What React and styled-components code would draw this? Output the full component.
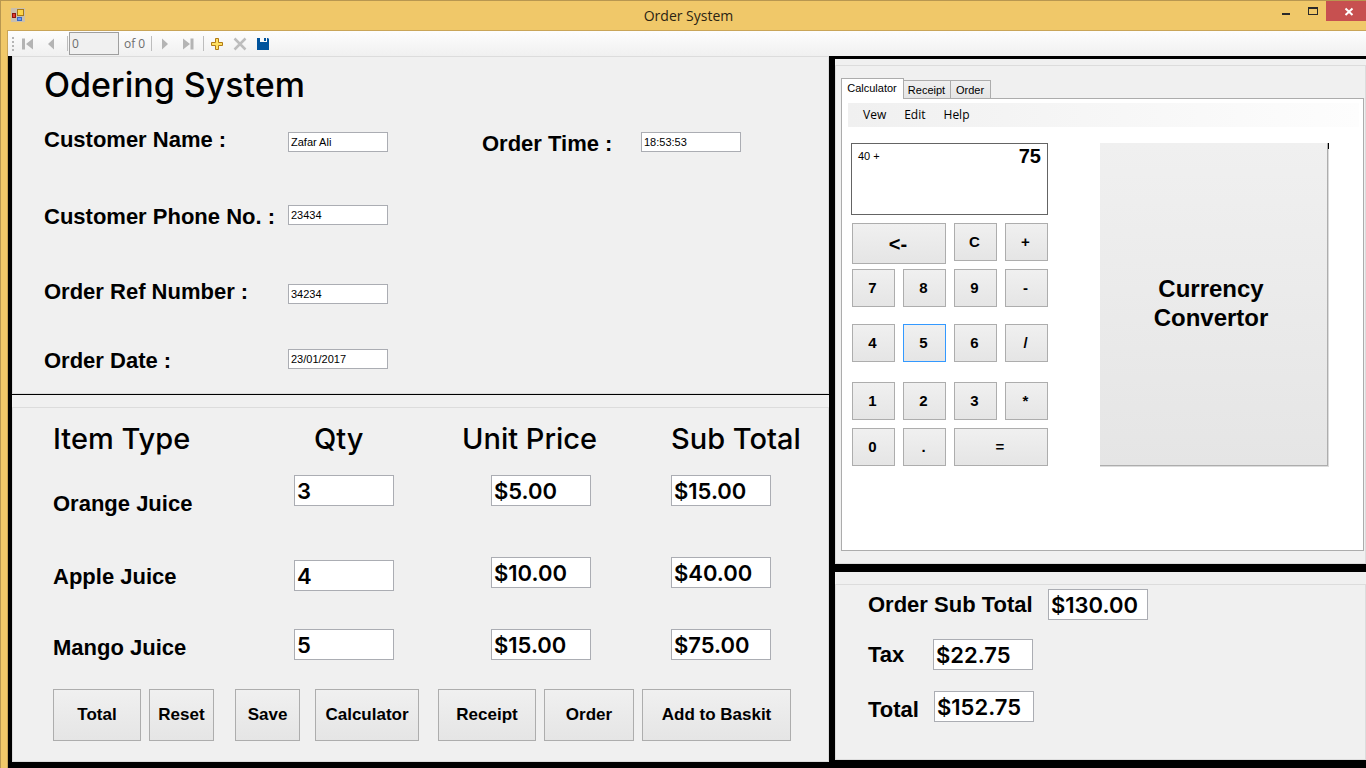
import React from "react";
import styled, { createGlobalStyle, css } from "styled-components";

const ui = '"Liberation Sans", Arial, sans-serif';
const display = 'Inter, "Liberation Sans", sans-serif';
const chrome = '"Open Sans", "Noto Sans", sans-serif';

const GlobalStyle = createGlobalStyle`
  *, *::before, *::after { box-sizing: border-box; }
  body { margin: 0; background: #f0c869; color: #000; font-family: ${ui}; font-size: 11px; }
  button, input { font: inherit; color: inherit; margin: 0; border-radius: 0; }
`;

const Window = styled.div`
  min-height: 100vh;
  display: flex;
  flex-direction: column;
  background: #f0c869;
  border: solid #b89750;
  border-width: 1px 0 0 1px;
`;

const TitleBar = styled.header`
  display: flex;
  align-items: flex-start;
  height: 29px;
  padding-left: 10px;
`;

const AppIcon = styled.svg`
  width: 14px;
  height: 14px;
  margin-top: 7px;
`;

const WindowTitle = styled.h1`
  flex: 1;
  margin: 0;
  padding-left: 80px;
  text-align: center;
  font: 400 14px/30px ${chrome};
  color: #2b2413;
`;

const WindowControls = styled.div`
  display: flex;
`;

const ControlButton = styled.button`
  width: ${(p) => (p.$close ? 40 : 27)}px;
  height: 20px;
  padding: 0;
  border: 0;
  background: ${(p) => (p.$close ? "#c75050" : "transparent")};
  display: flex;
  svg { display: block; }
`;

const Client = styled.div`
  flex: 1;
  display: flex;
  flex-direction: column;
  margin-left: 6px;
  border: solid #c9a558;
  border-width: 1px 0 0 1px;
  background: #000;
`;

const ToolStrip = styled.div`
  display: flex;
  align-items: center;
  height: 25px;
  padding-left: 4px;
  background: linear-gradient(#fdfdfd, #f0f0f0);
  font: 400 12px/24px ${chrome};
  color: #6d6d6d;
`;

const ToolButton = styled.button`
  width: 23px;
  height: 22px;
  padding: 0;
  border: 0;
  background: none;
  display: flex;
  align-items: center;
  justify-content: center;
`;

const Grip = styled.span`
  width: 2px;
  height: 14px;
  margin-right: 3px;
  background: repeating-linear-gradient(#b5b5b5 0 2px, transparent 2px 4px);
`;

const Divider = styled.span`
  width: 1px;
  height: 15px;
  margin: 0 1px 0 4px;
  background: #bdbdbd;
`;

const PositionInput = styled.input`
  width: 50px;
  height: 23px;
  padding: 0 2px;
  border: 1px solid #9f9f9f;
  background: #f0f0f0;
`;

const CountLabel = styled.span`
  width: 28px;
  padding-left: 5px;
  white-space: nowrap;
`;

const Workspace = styled.main`
  flex: 1;
  display: grid;
  grid-template-columns: minmax(0, 817fr) minmax(0, 531fr);
  column-gap: 6px;
  padding-left: 4px;
`;

const Column = styled.div`
  display: flex;
  flex-direction: column;
  gap: ${(p) => p.$gap}px;
  padding: ${(p) => p.$top}px 0 ${(p) => p.$bottom}px;
`;

const Panel = styled.section`
  display: flex;
  flex-direction: column;
  background: #f0f0f0;
  padding-top: ${(p) => p.$inset}px;
  flex: ${(p) => (p.$grow ? 1 : "none")};
`;

const Group = styled.div`
  flex: 1;
  border: 1px solid #dcdcdc;
  padding: ${(p) => p.$pad};
`;

const Heading = styled.h2`
  margin: 0;
  font: 500 34px/40px ${display};
`;

const CustomerArea = styled.div`
  display: grid;
  grid-template-columns: 438px 1fr;
  padding-top: 23px;
`;

const FieldList = styled.div`
  display: grid;
  align-content: start;
  grid-template-rows: ${(p) => p.$rows};
  padding-top: ${(p) => p.$top || 0}px;
`;

const Field = styled.div`
  display: flex;
  align-items: ${(p) => p.$align || "center"};
  height: ${(p) => (p.$large ? 31 : 24)}px;
`;

const FieldLabel = styled.label`
  flex: none;
  width: ${(p) => p.$width}px;
  font: 700 22px/24px ${ui};
  white-space: nowrap;
`;

const TextBox = styled.input`
  width: 100px;
  height: 20px;
  padding: 0 2px;
  border: 1px solid #abadb3;
  background: #fff;
  font: 400 11px/16px ${ui};
  ${(p) =>
    p.$large &&
    css`
      height: 31px;
      font: 600 22px/28px ${display};
    `}
`;

const ItemTable = styled.table`
  display: block;
  thead, tbody { display: block; }
  tbody { display: grid; grid-template-rows: 82px 72px 33px; align-items: start; padding-top: 16px; }
`;

const HeadRow = styled.tr`
  display: grid;
  grid-template-columns: 261px 148px 209px 1fr;
`;

const ColumnHead = styled.th`
  padding: 0;
  text-align: left;
  white-space: nowrap;
  font: 500 29px/40px ${display};
`;

const ItemRow = styled.tr`
  display: grid;
  grid-template-columns: 241px 197px 180px 1fr;
  height: ${(p) => p.$height}px;
`;

const ItemName = styled.th`
  align-self: end;
  padding: 0;
  text-align: left;
  font: 700 22px/28px ${ui};
`;

const ItemCell = styled.td`
  display: flex;
  align-items: ${(p) => p.$align || "flex-start"};
  padding: 0;
`;

const Actions = styled.div`
  display: flex;
  gap: 8px;
  padding-top: 27px;
`;

const PushButton = styled.button`
  border: 1px solid #adadad;
  background: linear-gradient(#f0f0f0, #e5e5e5);
  padding: 0;
`;

const ActionButton = styled(PushButton)`
  flex: none;
  width: ${(p) => p.$width}px;
  height: 52px;
  margin-left: ${(p) => p.$space || 0}px;
  font: 700 17px/20px ${ui};
`;

const TabList = styled.div`
  display: flex;
  align-items: flex-end;
  height: 21px;
  margin-bottom: -1px;
`;

const Tab = styled.button`
  height: ${(p) => (p.$active ? 21 : 19)}px;
  width: ${(p) => p.$width}px;
  margin-right: -1px;
  padding: 0 1px 0 0;
  border: 1px solid #acacac;
  background: ${(p) => (p.$active ? "#fff" : "linear-gradient(#f0f0f0, #e5e5e5)")};
  ${(p) => p.$active && "border-bottom: 0; padding-bottom: 3px; z-index: 1;"}
  font: 400 11px/16px ${ui};
`;

const TabPage = styled.div`
  height: 453px;
  padding: 4px 4px 0 6px;
  border: 1px solid #acacac;
  background: #fff;
`;

const MenuBar = styled.nav`
  display: flex;
  height: 24px;
  padding-left: 9px;
  background: linear-gradient(90deg, #f0f0f0, #fdfdfd);
`;

const MenuItem = styled.button`
  padding: 0 6px;
  margin-right: ${(p) => p.$space || 0}px;
  border: 0;
  background: none;
  font: 400 12px/24px ${chrome};
`;

const CalculatorArea = styled.div`
  display: flex;
  align-items: flex-start;
  justify-content: space-between;
  padding: 16px 30px 0 3px;
`;

const Calculator = styled.div`
  width: 197px;
`;

const Screen = styled.output`
  display: flex;
  justify-content: space-between;
  height: 72px;
  padding: 0 6px;
  border: 1px solid #646464;
  font: 400 11px/24px ${ui};
  strong { font-size: 20px; }
`;

const Keypad = styled.div`
  display: grid;
  grid-template-columns: repeat(4, 43px);
  grid-template-rows: 46px 55px 58px 46px 38px;
  column-gap: 8px;
  align-items: start;
  padding: 8px 0 0 1px;
`;

const Key = styled(PushButton)`
  height: ${(p) => (p.$tall ? 41 : 38)}px;
  grid-column: span ${(p) => p.$span || 1};
  padding-right: 2px;
  font: 700 ${(p) => (p.$tall ? 20 : 15)}px/20px ${ui};
  ${(p) => p.$focused && "border-color: #3399ff;"}
`;

const ConvertorButton = styled.button`
  position: relative;
  width: 229px;
  height: 324px;
  padding: 0 54px 4px 48px;
  border: solid #dcdcdc;
  border-width: 0 1px 1px 0;
  box-shadow: inset -1px -1px #adadad;
  background: linear-gradient(#f0f0f0, #e5e5e5);
  font: 700 24px/29px ${ui};
  &::after {
    content: "";
    position: absolute;
    top: 0;
    right: -1px;
    width: 1px;
    height: 6px;
    background: #000;
  }
`;

function Logo() {
  return (
    <AppIcon viewBox="0 0 14 14" aria-hidden="true">
      <rect width="14" height="14" fill="#c9bfae" />
      <rect x="6.500" y="1.500" width="6" height="6" fill="#fbd449" stroke="#a87814" />
      <rect x="1.500" y="5.500" width="3" height="4" fill="#e03a32" stroke="#8c1710" />
      <rect x="6.500" y="9.500" width="4" height="3" fill="#6c9cf0" stroke="#3767c4" />
    </AppIcon>
  );
}

function ToolIcon({ d, fill = "#b4b4b4", ...rest }) {
  return (
    <svg width="16" height="16" viewBox="0 0 16 16" aria-hidden="true">
      <path d={d} fill={fill} {...rest} />
    </svg>
  );
}

const customerFields = [
  { id: "name", label: "Customer Name :", value: "Zafar Ali", align: "flex-end" },
  { id: "phone", label: "Customer Phone No. :", value: "23434", align: "flex-start" },
  { id: "ref", label: "Order Ref Number :", value: "34234", align: "flex-end" },
  { id: "date", label: "Order Date :", value: "23/01/2017", align: "flex-start" },
];

const items = [
  { name: "Orange Juice", qty: "3", price: "$5.00", total: "$15.00", height: 43 },
  { name: "Apple Juice", qty: "4", price: "$10.00", total: "$40.00", height: 34, align: "flex-end" },
  { name: "Mango Juice", qty: "5", price: "$15.00", total: "$75.00", height: 33 },
];

const actions = [
  { text: "Total", width: 88 },
  { text: "Reset", width: 65 },
  { text: "Save", width: 65, space: 13 },
  { text: "Calculator", width: 104, space: 7 },
  { text: "Receipt", width: 98, space: 11 },
  { text: "Order", width: 90 },
  { text: "Add to Baskit", width: 149 },
];

const keys = [
  { text: "<-", span: 2, tall: true },
  ..."C+789-456/123*0.".split("").map((text) => ({ text, focused: text === "5" })),
  { text: "=", span: 2 },
];

const totals = [
  { id: "subtotal", label: "Order Sub Total", value: "$130.00", width: 180 },
  { id: "tax", label: "Tax", value: "$22.75", width: 65 },
  { id: "total", label: "Total", value: "$152.75", width: 66, align: "flex-end" },
];

export default function App() {
  return (
    <>
      <GlobalStyle />
      <Window>
        <TitleBar>
          <Logo />
          <WindowTitle>Order System</WindowTitle>
          <WindowControls>
            <ControlButton aria-label="Minimize">
              <svg width="27" height="20"><path d="M10 12h8v2h-8z" fill="#2a2a2a" /></svg>
            </ControlButton>
            <ControlButton aria-label="Maximize">
              <svg width="27" height="20"><path d="M9 6h10v8H9zM10 8v5h8V8z" fill="#2a2a2a" fillRule="evenodd" /></svg>
            </ControlButton>
            <ControlButton $close aria-label="Close">
              <svg width="40" height="20"><path d="M19.500 7.500l7 6.500M26.500 7.500l-7 6.500" stroke="#fff" strokeWidth="2" /></svg>
            </ControlButton>
          </WindowControls>
        </TitleBar>
        <Client>
          <ToolStrip role="toolbar">
            <Grip />
            <ToolButton aria-label="Move first"><ToolIcon d="M1 2.500h3v11H1zM12 2.500v11L5 8z" /></ToolButton>
            <ToolButton aria-label="Move previous"><ToolIcon d="M10 2.500v11L4 8z" /></ToolButton>
            <Divider />
            <PositionInput aria-label="Position" defaultValue="0" />
            <CountLabel>of 0</CountLabel>
            <Divider />
            <ToolButton aria-label="Move next"><ToolIcon d="M5 2.500v11L11 8z" /></ToolButton>
            <ToolButton aria-label="Move last"><ToolIcon d="M3 2.500v11L10 8zM10.500 2.500h3v11h-3z" /></ToolButton>
            <Divider />
            <ToolButton aria-label="Add new"><ToolIcon d="M6.500 2.500h3v4h4v3h-4v4h-3v-4h-4v-3h4z" fill="#ffe061" stroke="#b17a14" /></ToolButton>
            <ToolButton aria-label="Delete"><ToolIcon d="M2.500 2.500l11 11M13.500 2.500l-11 11" stroke="#bdbdbd" strokeWidth="2.500" /></ToolButton>
            <ToolButton aria-label="Save data"><ToolIcon d="M2 2h3v4h7V2h1l1 1v11H2zM9 2h2v3H9z" fill="#00539c" /></ToolButton>
          </ToolStrip>
          <Workspace>
            <Column $gap={1} $top={0} $bottom={6}>
              <Panel>
                <Group $pad="8px 0 20px 31px">
                  <Heading>Odering System</Heading>
                  <CustomerArea>
                    <FieldList $rows="77px 75px 69px 24px">
                      {customerFields.map((f) => (
                        <Field key={f.id} $align={f.align}>
                          <FieldLabel htmlFor={f.id} $width={244}>{f.label}</FieldLabel>
                          <TextBox id={f.id} defaultValue={f.value} />
                        </Field>
                      ))}
                    </FieldList>
                    <FieldList $rows="24px" $top={4}>
                      <Field $align="flex-start">
                        <FieldLabel htmlFor="time" $width={159}>Order Time :</FieldLabel>
                        <TextBox id="time" defaultValue="18:53:53" />
                      </Field>
                    </FieldList>
                  </CustomerArea>
                </Group>
              </Panel>
              <Panel $inset={12} $grow>
                <Group $pad="11px 0 20px 40px">
                  <ItemTable>
                    <thead>
                      <HeadRow>
                        <ColumnHead>Item Type</ColumnHead>
                        <ColumnHead>Qty</ColumnHead>
                        <ColumnHead>Unit Price</ColumnHead>
                        <ColumnHead>Sub Total</ColumnHead>
                      </HeadRow>
                    </thead>
                    <tbody>
                      {items.map((item) => (
                        <ItemRow key={item.name} $height={item.height}>
                          <ItemName scope="row">{item.name}</ItemName>
                          <ItemCell $align={item.align}>
                            <TextBox $large aria-label={`${item.name} quantity`} defaultValue={item.qty} />
                          </ItemCell>
                          <ItemCell>
                            <TextBox $large aria-label={`${item.name} unit price`} defaultValue={item.price} />
                          </ItemCell>
                          <ItemCell>
                            <TextBox $large aria-label={`${item.name} sub total`} defaultValue={item.total} />
                          </ItemCell>
                        </ItemRow>
                      ))}
                    </tbody>
                  </ItemTable>
                  <Actions>
                    {actions.map((a) => (
                      <ActionButton key={a.text} $width={a.width} $space={a.space}>{a.text}</ActionButton>
                    ))}
                  </Actions>
                </Group>
              </Panel>
            </Column>
            <Column $gap={8} $top={3} $bottom={8}>
              <Panel $inset={6}>
                <Group $pad="12px 1px 12px 5px">
                  <TabList role="tablist">
                    <Tab role="tab" aria-selected="true" $active $width={63}>Calculator</Tab>
                    <Tab role="tab" aria-selected="false" $width={48}>Receipt</Tab>
                    <Tab role="tab" aria-selected="false" $width={41}>Order</Tab>
                  </TabList>
                  <TabPage role="tabpanel">
                    <MenuBar>
                      <MenuItem $space={6}>Vew</MenuItem>
                      <MenuItem $space={6}>Edit</MenuItem>
                      <MenuItem>Help</MenuItem>
                    </MenuBar>
                    <CalculatorArea>
                      <Calculator>
                        <Screen>
                          <span>40 +</span>
                          <strong>75</strong>
                        </Screen>
                        <Keypad>
                          {keys.map((k) => (
                            <Key key={k.text} $span={k.span} $tall={k.tall} $focused={k.focused}>{k.text}</Key>
                          ))}
                        </Keypad>
                      </Calculator>
                      <ConvertorButton>Currency Convertor</ConvertorButton>
                    </CalculatorArea>
                  </TabPage>
                </Group>
              </Panel>
              <Panel $inset={12} $grow>
                <Group $pad="4px 0 37px 32px">
                  <FieldList $rows="50px 52px 31px">
                    {totals.map((t) => (
                      <Field key={t.id} $large $align={t.align}>
                        <FieldLabel htmlFor={t.id} $width={t.width}>{t.label}</FieldLabel>
                        <TextBox $large id={t.id} defaultValue={t.value} />
                      </Field>
                    ))}
                  </FieldList>
                </Group>
              </Panel>
            </Column>
          </Workspace>
        </Client>
      </Window>
    </>
  );
}
